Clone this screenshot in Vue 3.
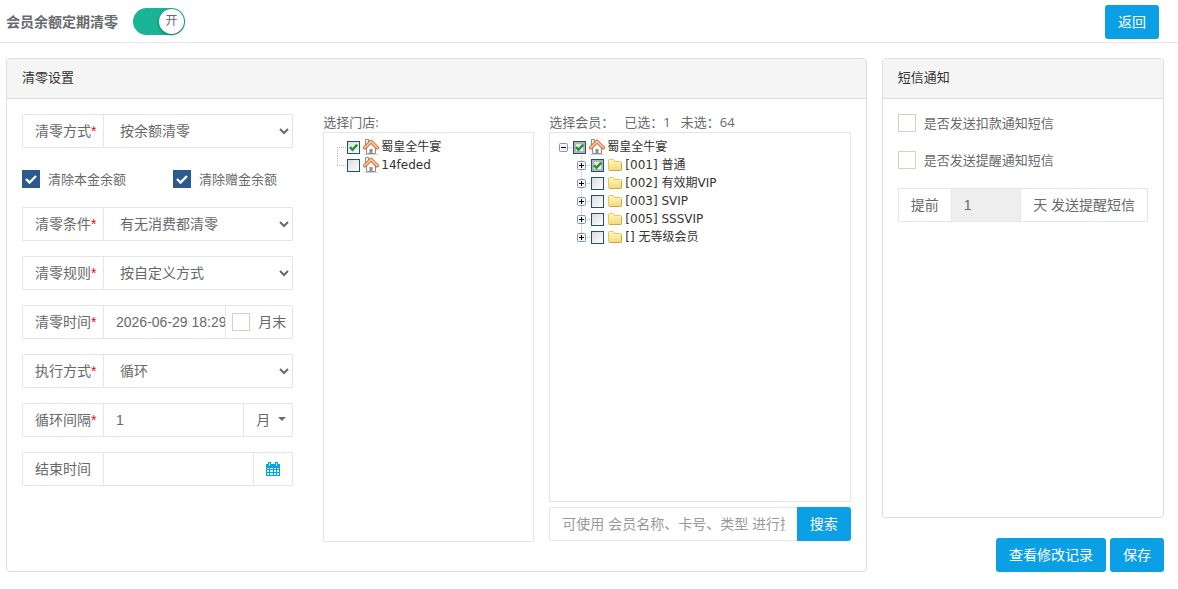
<script setup>
import { ref } from 'vue'

const enabled = ref(true)
const method = ref('按余额清零')
const condition = ref('有无消费都清零')
const rule = ref('按自定义方式')
const clearTime = ref('2026-06-29 18:29:00')
const monthEnd = ref(false)
const mode = ref('循环')
const interval = ref('1')
const endTime = ref('')
const principal = ref(true)
const bonus = ref(true)
const keyword = ref('')
const notifyDeduct = ref(false)
const notifyRemind = ref(false)
const aheadDays = ref('1')

const stores = ref([
  { id: 's1', name: '蜀皇全牛宴', checked: true },
  { id: 's2', name: '14feded', checked: false },
])
const members = ref([
  { id: 'm0', name: '蜀皇全牛宴', root: true, checked: true, part: true },
  { id: 'm1', name: '[001] 普通', checked: true, part: true },
  { id: 'm2', name: '[002] 有效期VIP', checked: false },
  { id: 'm3', name: '[003] SVIP', checked: false },
  { id: 'm4', name: '[005] SSSVIP', checked: false },
  { id: 'm5', name: '[] 无等级会员', checked: false },
])
</script>

<template>
  <div class="page">
    <svg class="defs" aria-hidden="true">
      <defs>
        <linearGradient id="folderFill" x1="0" y1="0" x2="0" y2="1">
          <stop offset="0" stop-color="#fff8bd" />
          <stop offset="1" stop-color="#f3da78" />
        </linearGradient>
        <symbol id="home" viewBox="0 0 16 16">
          <path d="M1 15.5h14" stroke="#d4d4d4" />
          <path d="M2.500 7V.5h3V5" fill="#f4f4f4" stroke="#8c8c8c" />
          <path d="M3.500 8 8 4l4.500 4v6.500h-9z" fill="#fdfdfd" stroke="#8c8c8c" />
          <path d="M6.500 10h3v4.500h-3z" fill="#8f8f8f" />
          <path d="M1.800 8.700 8 2.500l6.200 6.200" fill="none" stroke="#d4622c" stroke-width="3.600" stroke-linecap="round" stroke-linejoin="round" />
          <path d="M1.800 8.700 8 2.500l6.200 6.200" fill="none" stroke="#fbc49e" stroke-width="1.900" stroke-linecap="round" stroke-linejoin="round" />
        </symbol>
        <symbol id="folder" viewBox="0 0 16 16">
          <path d="M1.500 3.500q0-1 1-1h3.500q.6 0 .9.600l.6 1.400h6q1 0 1 1v7q0 1-1 1h-11q-1 0-1-1z" fill="url(#folderFill)" stroke="#e3c765" />
          <path d="M14.500 6v6.500q0 1-1 1h-11" fill="none" stroke="#cfa548" />
        </symbol>
        <symbol id="treeTick" viewBox="0 0 13 13">
          <path d="M3 6.200 5.500 8.800 10.200 3.600" fill="none" stroke="#1c9a24" stroke-width="2.400" />
        </symbol>
        <symbol id="tick" viewBox="0 0 18 18">
          <path d="m4 9 3.500 3.500L14 6" fill="none" stroke="#fff" stroke-width="2.400" />
        </symbol>
      </defs>
    </svg>

    <header class="topbar">
      <h1 id="page-title">会员余额定期清零</h1>
      <button class="toggle" :class="{ on: enabled }" type="button" role="switch" :aria-checked="enabled" aria-labelledby="page-title" @click="enabled = !enabled">
        <span class="knob">{{ enabled ? '开' : '关' }}</span>
      </button>
      <button class="btn back" type="button">返回</button>
    </header>

    <main class="columns">
      <section class="panel">
        <h2>清零设置</h2>
        <div class="panel-body settings">
          <form class="fields" @submit.prevent>
            <div class="group">
              <label class="addon name" for="method">清零方式<i>*</i></label>
              <select id="method" v-model="method"><option>按余额清零</option></select>
            </div>
            <div class="checks">
              <label class="check"><span class="box"><input v-model="principal" type="checkbox"><svg v-if="principal"><use href="#tick" /></svg></span>清除本金余额</label>
              <label class="check"><span class="box"><input v-model="bonus" type="checkbox"><svg v-if="bonus"><use href="#tick" /></svg></span>清除赠金余额</label>
            </div>
            <div class="group">
              <label class="addon name" for="condition">清零条件<i>*</i></label>
              <select id="condition" v-model="condition"><option>有无消费都清零</option></select>
            </div>
            <div class="group">
              <label class="addon name" for="rule">清零规则<i>*</i></label>
              <select id="rule" v-model="rule"><option>按自定义方式</option></select>
            </div>
            <div class="group">
              <label class="addon name" for="clear-time">清零时间<i>*</i></label>
              <input id="clear-time" v-model="clearTime" class="text flush" type="text">
              <label class="addon month-end"><span class="box"><input v-model="monthEnd" type="checkbox"><svg v-if="monthEnd"><use href="#tick" /></svg></span>月末</label>
            </div>
            <div class="group">
              <label class="addon name" for="mode">执行方式<i>*</i></label>
              <select id="mode" v-model="mode"><option>循环</option></select>
            </div>
            <div class="group">
              <label class="addon name" for="interval">循环间隔<i>*</i></label>
              <input id="interval" v-model="interval" class="text" type="text">
              <button class="addon unit" type="button">月<span class="caret"></span></button>
            </div>
            <div class="group">
              <label class="addon name" for="end-time">结束时间</label>
              <input id="end-time" v-model="endTime" class="text" type="text">
              <button class="addon calendar" type="button" aria-label="结束时间">
                <svg viewBox="0 0 14 14">
                  <path d="M0 2h14v12H0z" fill="#0b9fe5" />
                  <path d="M1 6h2v1H1zM4 6h3v1H4zM8 6h2v1H8zM11 6h2v1h-2zM1 8h2v2H1zM4 8h3v2H4zM8 8h2v2H8zM11 8h2v2h-2zM1 11h2v2H1zM4 11h3v2H4zM8 11h2v2H8zM11 11h2v2h-2z" fill="#e4f5fd" />
                  <path d="M2 0h3v4H2zM9 0h3v4H9z" fill="#0b9fe5" />
                  <path d="M3.500 1v3M10.500 1v3" stroke="#c4e8fa" />
                </svg>
              </button>
            </div>
          </form>

          <div class="picker">
            <div class="caption">选择门店:</div>
            <ul class="tree">
              <li v-for="(s, i) in stores" :key="s.id" class="node">
                <span class="switch elbow" :class="{ last: i === stores.length - 1 }"></span>
                <label>
                  <span class="tree-box"><input v-model="s.checked" type="checkbox"><svg v-if="s.checked"><use href="#treeTick" /></svg></span>
                  <svg class="node-icon"><use href="#home" /></svg>{{ s.name }}
                </label>
              </li>
            </ul>
          </div>

          <div class="picker">
            <div class="caption counts"><span>选择会员：</span><span>已选：1</span><span>未选：64</span></div>
            <ul class="tree">
              <li v-for="(m, i) in members" :key="m.id" class="node" :class="{ child: !m.root, end: i === members.length - 1 }">
                <button class="switch" type="button" :aria-label="m.name" :aria-expanded="!!m.root">
                  <svg viewBox="0 0 9 9">
                    <rect x=".5" y=".5" width="8" height="8" rx="1" fill="#f4f4f4" stroke="#8296ad" />
                    <path :d="m.root ? 'M2 4.500h5' : 'M2 4.500h5M4.500 2v5'" stroke="#000" />
                  </svg>
                </button>
                <label>
                  <span class="tree-box" :class="{ part: m.part }"><input v-model="m.checked" type="checkbox"><svg v-if="m.checked"><use href="#treeTick" /></svg></span>
                  <svg class="node-icon"><use :href="m.root ? '#home' : '#folder'" /></svg>{{ m.name }}
                </label>
              </li>
            </ul>
            <div class="search">
              <input v-model="keyword" class="text" type="text" aria-label="搜索会员" placeholder="可使用 会员名称、卡号、类型 进行搜索">
              <button class="btn" type="button">搜索</button>
            </div>
          </div>
        </div>
      </section>

      <aside>
        <section class="panel notice">
          <h2>短信通知</h2>
          <div class="panel-body">
            <label class="check"><span class="box"><input v-model="notifyDeduct" type="checkbox"><svg v-if="notifyDeduct"><use href="#tick" /></svg></span>是否发送扣款通知短信</label>
            <label class="check"><span class="box"><input v-model="notifyRemind" type="checkbox"><svg v-if="notifyRemind"><use href="#tick" /></svg></span>是否发送提醒通知短信</label>
            <div class="group">
              <label class="addon" for="ahead">提前</label>
              <input id="ahead" v-model="aheadDays" class="text" type="text" disabled>
              <span class="addon">天 发送提醒短信</span>
            </div>
          </div>
        </section>
        <div class="actions">
          <button class="btn" type="button">查看修改记录</button>
          <button class="btn" type="button">保存</button>
        </div>
      </aside>
    </main>
  </div>
</template>

<style>
body {
  background: #fff;
}
</style>

<style scoped>
.page {
  color: #676a6c;
  font: 13px/18px "Open Sans", "Noto Sans CJK SC", sans-serif;
}
.page * {
  box-sizing: border-box;
}
.defs {
  position: absolute;
  width: 0;
  height: 0;
}
button,
input,
select {
  margin: 0;
  font-family: "Liberation Sans", "Noto Sans CJK SC", sans-serif;
  font-size: 14px;
  color: inherit;
}
button {
  cursor: pointer;
}
.topbar {
  display: flex;
  align-items: center;
  height: 43px;
  padding: 1px 19px 0 6px;
  border-bottom: 1px solid #e7e7e7;
}
h1 {
  margin: 0 15px 0 0;
  font-size: 14px;
  line-height: 20px;
  font-weight: 700;
}
.toggle {
  display: flex;
  width: 52px;
  height: 27px;
  padding: 1px;
  border: 0;
  border-radius: 14px;
  background: #ccc;
}
.toggle.on {
  justify-content: flex-end;
  background: #1ab394;
}
.knob {
  width: 25px;
  height: 25px;
  border-radius: 50%;
  background: #fff;
  box-shadow: 0 1px 3px rgba(0, 0, 0, 0.4);
  font-size: 12px;
  line-height: 24px;
  text-align: center;
}
.btn {
  height: 34px;
  padding: 0 13px 2px;
  border: 0;
  border-radius: 3px;
  background: #0b9fe5;
  color: #fff;
  white-space: nowrap;
}
.back {
  margin-left: auto;
}
.columns {
  display: grid;
  grid-template-columns: minmax(0, 61fr) minmax(0, 20fr);
  gap: 15px;
  padding: 15px 14px 15px 6px;
}
.panel {
  border: 1px solid #ddd;
  border-radius: 4px;
}
h2 {
  margin: 0;
  padding: 9px 15px 12px;
  border-bottom: 1px solid #ddd;
  border-radius: 3px 3px 0 0;
  background: #f5f5f5;
  color: #333;
  font-size: 13px;
  line-height: 18px;
  font-weight: 400;
}
.panel-body {
  padding: 15px;
}
.settings {
  display: grid;
  grid-template-columns: minmax(0, 19fr) minmax(0, 14fr) minmax(0, 20fr);
  gap: 15px;
  padding-bottom: 29px;
}
.fields {
  display: flex;
  flex-direction: column;
  gap: 15px;
  padding-right: 15px;
}
.group {
  display: flex;
  height: 34px;
  border: 1px solid #e5e6e7;
  border-radius: 1px;
  font-size: 14px;
}
.addon {
  display: flex;
  flex: none;
  align-items: center;
  padding: 0 12px;
  white-space: nowrap;
}
.name {
  width: 81px;
  padding-right: 0;
  border-right: 1px solid #e5e6e7;
}
.name i {
  color: #f00;
  font-family: "Liberation Sans", sans-serif;
  font-style: normal;
}
.group select {
  flex: 1;
  min-width: 0;
  padding: 0 0 0 12px;
  border: 0;
  background: #fff;
}
.text {
  flex: 1;
  min-width: 0;
  padding: 0 12px;
  border: 0;
  background: #fff;
}
.text::placeholder {
  color: #999;
}
.flush {
  padding-right: 0;
}
.month-end {
  gap: 8px;
  padding: 0 6px;
  border-left: 1px solid #e5e6e7;
}
.unit,
.calendar {
  border: 0;
  border-left: 1px solid #e5e6e7;
  background: #fff;
}
.unit {
  gap: 8px;
  padding: 0 6px 2px 12px;
}
.caret {
  border: 4px solid transparent;
  border-top-color: #676a6c;
  border-bottom: 0;
}
.calendar svg {
  width: 14px;
  height: 14px;
}
.checks {
  display: grid;
  grid-template-columns: 151px 1fr;
  align-items: center;
  height: 29px;
  padding-top: 3px;
}
.check {
  display: flex;
  align-items: center;
  gap: 8px;
  white-space: nowrap;
}
.box,
.tree-box {
  display: grid;
  flex: none;
}
.box > *,
.tree-box > * {
  grid-area: 1 / 1;
  width: 100%;
  height: 100%;
}
.box svg,
.tree-box svg {
  pointer-events: none;
}
.box {
  width: 18px;
  height: 18px;
}
.box input,
.tree-box input {
  appearance: none;
  border: 1px solid #d2d2c8;
  background: #fff;
}
.box input:checked {
  border-color: #2b5a8f;
  background: #2b5a8f;
}
.picker {
  display: flex;
  flex-direction: column;
}
.caption {
  line-height: 16px;
  padding-bottom: 2px;
}
.counts {
  display: flex;
  gap: 10px;
}
.tree {
  flex: 1;
  min-height: 370px;
  margin: 0;
  padding: 5px;
  border: 1px solid #e5e6e7;
  list-style: none;
}
.node {
  display: flex;
  height: 18px;
  color: #333;
  font: 12px/18px "DejaVu Sans", "Noto Sans CJK SC", sans-serif;
}
.child {
  padding-left: 18px;
}
.node label {
  display: flex;
  align-items: center;
  white-space: nowrap;
}
.switch {
  display: flex;
  flex: none;
  align-items: center;
  width: 18px;
  height: 18px;
  padding: 0 0 0 4px;
  border: 0;
  background: repeating-linear-gradient(90deg, #bbb 0 1px, transparent 1px 2px) 8px 9px / 9px 1px no-repeat;
}
.switch svg {
  width: 9px;
  height: 9px;
}
.child .switch {
  background: repeating-linear-gradient(#bbb 0 1px, transparent 1px 2px) 8px 0 / 1px 18px no-repeat,
    repeating-linear-gradient(90deg, #bbb 0 1px, transparent 1px 2px) 8px 9px / 9px 1px no-repeat;
}
.child.end .switch {
  background-size: 1px 10px, 9px 1px;
}
.elbow {
  background: repeating-linear-gradient(#bbb 0 1px, transparent 1px 2px) 8px 9px / 1px 9px no-repeat,
    repeating-linear-gradient(90deg, #bbb 0 1px, transparent 1px 2px) 8px 9px / 9px 1px no-repeat;
}
.elbow.last {
  background-position: 8px 0, 8px 9px;
}
.tree-box {
  width: 13px;
  height: 13px;
  margin-right: 3px;
}
.tree-box input {
  border-color: #1c5180;
  background: linear-gradient(135deg, #dcdcd7, #fff);
}
.tree-box.part input {
  box-shadow: inset 0 0 0 2px #b5b5b5;
}
.node-icon {
  width: 16px;
  height: 16px;
  margin-right: 2px;
}
.search {
  display: flex;
  height: 34px;
  margin: 5px 0 1px;
}
.search .text {
  border: 1px solid #e5e6e7;
  border-right: 0;
  border-radius: 2px 0 0 2px;
}
.search .btn {
  border-radius: 0 3px 3px 0;
}
.notice {
  min-height: 460px;
}
.notice .check {
  margin-bottom: 19px;
}
.notice .addon + .text {
  border: solid #e5e6e7;
  border-width: 0 1px;
}
.text:disabled {
  background: #eee;
}
.actions {
  display: flex;
  justify-content: flex-end;
  gap: 4px;
  margin-top: 20px;
}
</style>
